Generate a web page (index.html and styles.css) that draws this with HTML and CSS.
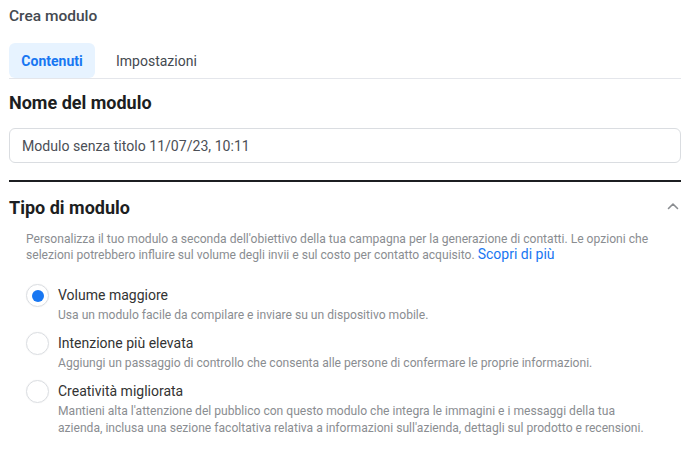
FILE: index.html
```html
<!DOCTYPE html>
<html lang="it">
<head>
<meta charset="utf-8">
<title>Crea modulo</title>
<link rel="stylesheet" href="styles.css">
</head>
<body>
<div class="page">
  <div class="title">Crea modulo</div>
  <div class="tabs">
    <div class="tab active">Contenuti</div>
    <div class="tab">Impostazioni</div>
  </div>
  <h2 class="heading name-heading">Nome del modulo</h2>
  <div class="input">Modulo senza titolo 11/07/23, 10:11</div>
  <div class="rule"></div>
  <div class="section-head">
    <h2 class="heading">Tipo di modulo</h2>
    <svg class="chevron" width="12" height="8" viewBox="0 0 12 8"><polyline points="1.5,6.5 6,2 10.5,6.5" fill="none" stroke="#8a8d91" stroke-width="1.6" stroke-linecap="round" stroke-linejoin="round"/></svg>
  </div>
  <p class="desc">Personalizza il tuo modulo a seconda dell'obiettivo della tua campagna per la generazione di contatti. Le opzioni che selezioni potrebbero influire sul volume degli invii e sul costo per contatto acquisito. <a class="link">Scopri di più</a></p>
  <div class="options">
    <div class="option">
      <span class="radio checked"></span>
      <div class="opt-text">
        <div class="opt-label">Volume maggiore</div>
        <div class="opt-sub">Usa un modulo facile da compilare e inviare su un dispositivo mobile.</div>
      </div>
    </div>
    <div class="option">
      <span class="radio"></span>
      <div class="opt-text">
        <div class="opt-label">Intenzione più elevata</div>
        <div class="opt-sub">Aggiungi un passaggio di controllo che consenta alle persone di confermare le proprie informazioni.</div>
      </div>
    </div>
    <div class="option">
      <span class="radio"></span>
      <div class="opt-text">
        <div class="opt-label">Creatività migliorata</div>
        <div class="opt-sub">Mantieni alta l'attenzione del pubblico con questo modulo che integra le immagini e i messaggi della tua azienda, inclusa una sezione facoltativa relativa a informazioni sull'azienda, dettagli sul prodotto e recensioni.</div>
      </div>
    </div>
  </div>
</div>
</body>
</html>
```

FILE: styles.css
```css
* { box-sizing: border-box; }
html, body { margin: 0; padding: 0; background: #fff; }
body {
  font-family: Roboto, "Liberation Sans", Arial, sans-serif;
  color: #1c1e21;
}
.page {
  width: 672px;
  margin-left: 9px;
  padding-top: 6px;
}
.title {
  font-size: 15.5px;
  line-height: 20px;
  font-weight: 500;
  color: #444950;
}
.tabs {
  display: flex;
  align-items: center;
  margin-top: 17px;
  border-bottom: 1px solid #e4e6eb;
}
.tab {
  height: 35px;
  display: flex;
  align-items: center;
  padding: 0 11px;
  font-size: 14px;
  color: #444950;
}
.tab.active {
  width: 86px;
  justify-content: center;
  padding: 0;
  background: #e7f3ff;
  color: #1877f2;
  font-weight: 700;
  margin-right: 10px;
  border-radius: 6px;
}
.heading {
  margin: 0;
  font-size: 18px;
  line-height: 22px;
  font-weight: 700;
  color: #1c1e21;
}
.name-heading { margin-top: 13px; }
.input {
  margin-top: 14px;
  height: 35px;
  border: 1px solid #dadde1;
  border-radius: 6px;
  padding: 0 12px;
  display: flex;
  align-items: center;
  font-size: 14.1px;
  color: #4b4f56;
}
.rule {
  margin-top: 17px;
  height: 2px;
  background: #1c1e21;
}
.section-head {
  margin-top: 15px;
  display: flex;
  align-items: center;
  justify-content: space-between;
}
.chevron { margin-right: 2px; margin-top: -4px; }
.desc {
  margin: 12px 0 0 0;
  padding-left: 17px;
  font-size: 12.1px;
  line-height: 16px;
  color: #8a8d91;
}
.link {
  color: #1877f2;
  font-size: 14px;
  line-height: 1;
}
.options {
  margin-top: 22px;
  padding-left: 17px;
  display: flex;
  flex-direction: column;
  gap: 9px;
}
.option {
  display: flex;
  align-items: flex-start;
  gap: 9px;
}
.opt-text { max-width: 600px; }
.radio {
  flex: none;
  width: 23px;
  height: 23px;
  margin-top: -1px;
  border-radius: 50%;
  border: 1px solid #dadde1;
  box-shadow: 0 0 1px rgba(0,0,0,0.1);
  display: flex;
  align-items: center;
  justify-content: center;
}
.radio.checked::after {
  content: "";
  width: 12px;
  height: 12px;
  border-radius: 50%;
  background: #1877f2;
}
.opt-label {
  font-size: 14px;
  line-height: 20px;
  color: #333;
}
.opt-sub {
  margin-top: 2px;
  font-size: 12.1px;
  line-height: 17px;
  color: #8a8d91;
}
```
